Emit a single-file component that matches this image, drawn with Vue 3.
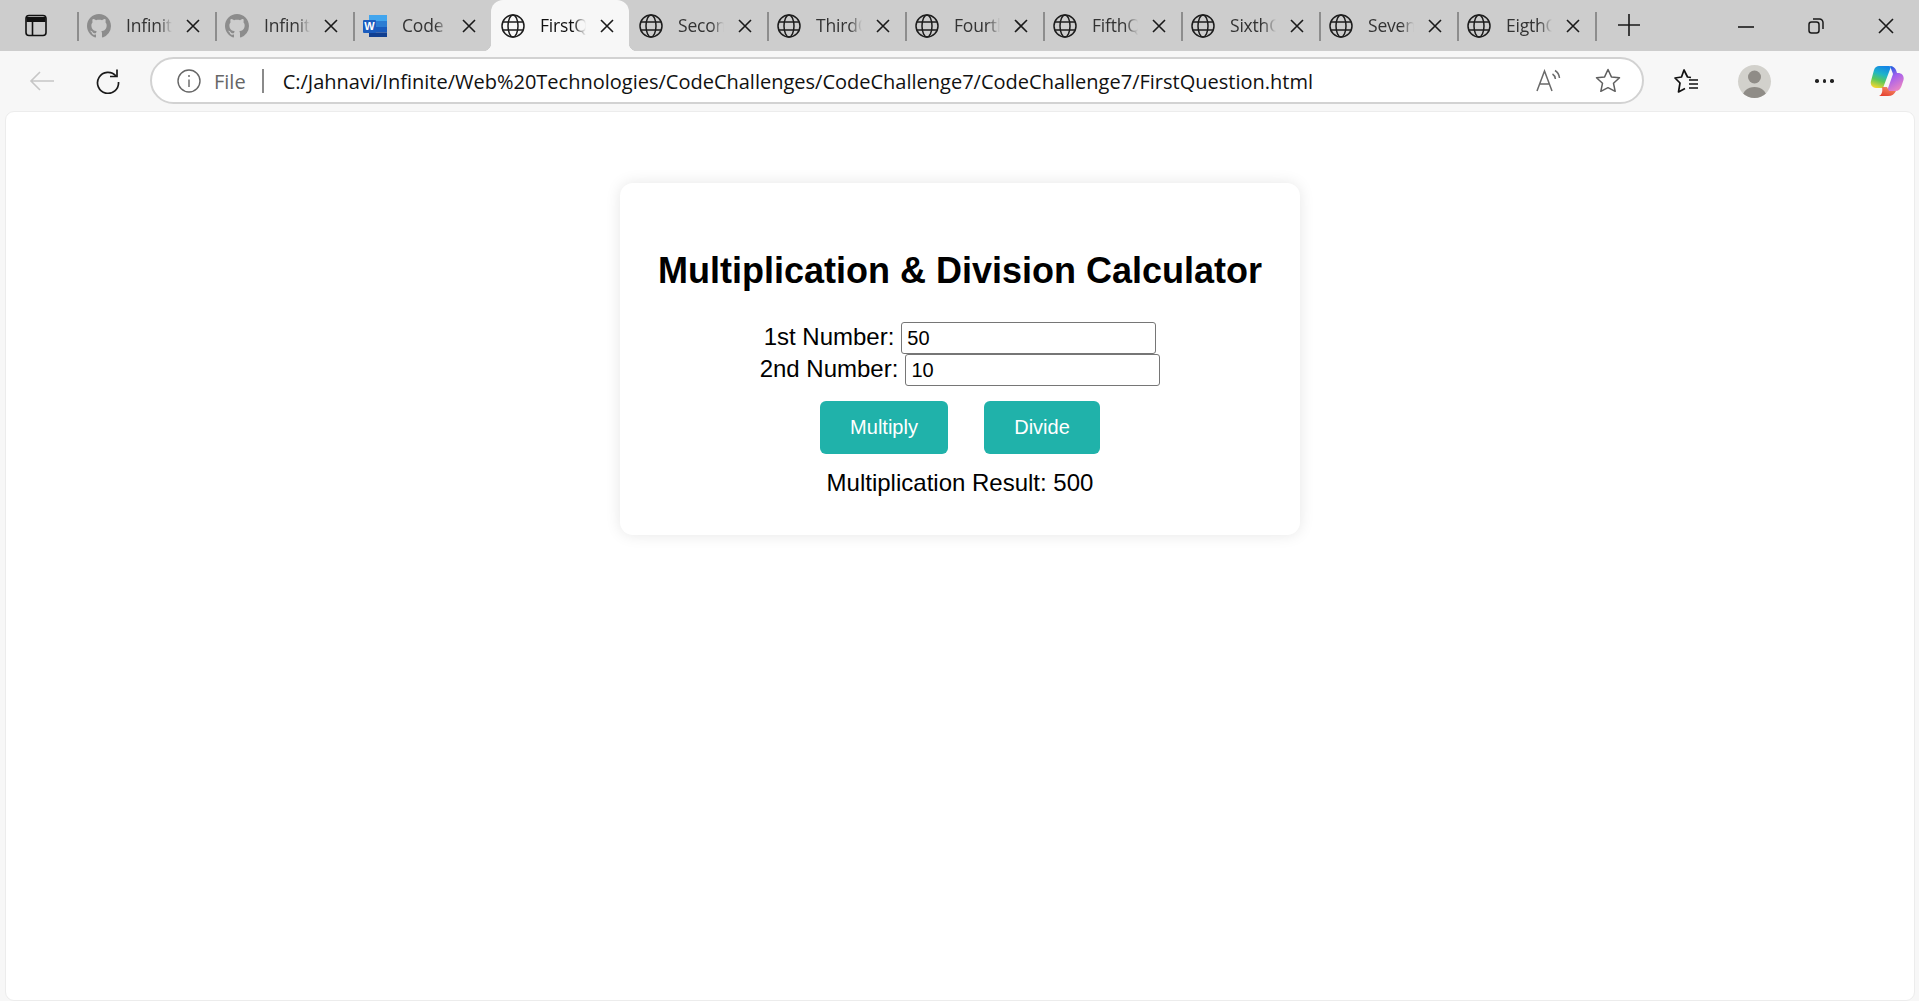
<template>
  <div class="window">
    <div class="tabbar">
      <div class="sidebar-btn">
        <svg width="22" height="23" viewBox="0 0 22 23" fill="none" stroke="#111" stroke-width="1.6">
          <rect x="1" y="1.5" width="20" height="20" rx="3" />
          <path d="M1.5 5.5h19" stroke-width="5" />
          <path d="M7.5 7v14" />
        </svg>
      </div>
      <div
        v-for="(tab, i) in tabs"
        :key="i"
        class="tab"
        :class="{ active: i === activeTab, nosep: i === activeTab || i === activeTab + 1 }"
      >
        <svg v-if="tab.icon === 'github'" class="tab-icon" viewBox="0 0 16 16" fill="#8c8c8c">
          <path d="M8 0C3.58 0 0 3.58 0 8c0 3.54 2.29 6.53 5.47 7.59.4.07.55-.17.55-.38 0-.19-.01-.82-.01-1.49-2.01.37-2.53-.49-2.69-.94-.09-.23-.48-.94-.82-1.13-.28-.15-.68-.52-.01-.53.63-.01 1.08.58 1.23.82.72 1.21 1.87.87 2.33.66.07-.52.28-.87.51-1.07-1.78-.2-3.64-.89-3.64-3.95 0-.87.31-1.59.82-2.15-.08-.2-.36-1.02.08-2.12 0 0 .67-.21 2.2.82.64-.18 1.32-.27 2-.27s1.36.09 2 .27c1.53-1.04 2.2-.82 2.2-.82.44 1.1.16 1.92.08 2.12.51.56.82 1.27.82 2.15 0 3.07-1.87 3.75-3.65 3.95.29.25.54.73.54 1.48 0 1.07-.01 1.93-.01 2.2 0 .21.15.46.55.38A8.01 8.01 0 0 0 16 8c0-4.42-3.58-8-8-8z" />
        </svg>
        <svg v-else-if="tab.icon === 'word'" class="tab-icon" viewBox="0 0 24 24">
          <rect x="6" y="1" width="18" height="6" fill="#41a5ee" />
          <rect x="6" y="7" width="18" height="6" fill="#2b7cd3" />
          <rect x="6" y="13" width="18" height="5.5" fill="#185abd" />
          <rect x="6" y="18.5" width="18" height="4.5" fill="#103f91" />
          <rect x="0" y="6" width="13" height="13" rx="1" fill="#1a5cbe" />
          <text x="6.5" y="16" class="word-letter" text-anchor="middle">W</text>
        </svg>
        <svg v-else class="tab-icon" viewBox="0 0 24 24" fill="none" stroke="#1c1c1c" stroke-width="1.5">
          <circle cx="12" cy="12" r="11" />
          <ellipse cx="12" cy="12" rx="5" ry="11" />
          <path d="M2 8h20M2 16h20" />
        </svg>
        <span class="tab-title">{{ tab.title }}</span>
        <svg class="tab-close" viewBox="0 0 14 14" fill="none" stroke="#1a1a1a" stroke-width="1.6">
          <path d="M1 1l12 12M13 1L1 13" />
        </svg>
      </div>
      <div class="tab-end"></div>
      <div class="new-tab">
        <svg width="22" height="22" viewBox="0 0 22 22" stroke="#1a1a1a" stroke-width="1.6">
          <path d="M11 0v22M0 11h22" />
        </svg>
      </div>
      <div class="win-controls">
        <svg width="16" height="16" viewBox="0 0 16 16" stroke="#1a1a1a" stroke-width="1.6" fill="none">
          <path d="M0 9h16" />
        </svg>
        <svg width="16" height="16" viewBox="0 0 16 16" stroke="#1a1a1a" stroke-width="1.5" fill="none">
          <rect x="1" y="4" width="10" height="11" rx="2.5" />
          <path d="M5 1h6.5A3.5 3.5 0 0 1 15 4.5V11" />
        </svg>
        <svg width="16" height="16" viewBox="0 0 16 16" stroke="#1a1a1a" stroke-width="1.6" fill="none">
          <path d="M1 1l14 14M15 1L1 15" />
        </svg>
      </div>
    </div>

    <div class="toolbar">
      <svg class="back" width="26" height="22" viewBox="0 0 26 22" fill="none" stroke="#c6c6c6" stroke-width="1.6">
        <path d="M25 11H2M11 2l-9 9 9 9" />
      </svg>
      <svg class="reload" width="26" height="26" viewBox="0 0 26 26" fill="none" stroke="#1a1a1a" stroke-width="1.7">
        <path d="M21 8a10.5 10.5 0 1 0 2.5 6" />
        <path d="M22 1.5V8.500h-7" />
      </svg>
      <div class="omnibox">
        <svg class="info" width="24" height="24" viewBox="0 0 24 24" fill="none" stroke="#666" stroke-width="1.4">
          <circle cx="12" cy="12" r="11" />
          <path d="M12 10.500v7.500M12 6v2" />
        </svg>
        <span class="file">File</span>
        <span class="omni-sep"></span>
        <span class="url">C:/Jahnavi/Infinite/Web%20Technologies/CodeChallenges/CodeChallenge7/CodeChallenge7/FirstQuestion.html</span>
        <svg class="read" width="25" height="23" viewBox="0 0 25 23" fill="none" stroke="#6a6a6a" stroke-width="1.5">
          <path d="M1 22L8.500 2l7.500 20M3.800 15h9.400" />
          <path d="M16.500 5c1.600 1 2.600 2.600 2.900 5M19 1.500c2.500 1.500 4.100 4 4.500 7.500" />
        </svg>
        <svg class="star" width="26" height="25" viewBox="0 0 26 25" fill="none" stroke="#5f5f5f" stroke-width="1.5" stroke-linejoin="round">
          <path d="M13 1.500l3.400 7.400 8.100.9-6 5.500 1.700 8L13 19.700l-7.200 3.600 1.700-8-6-5.500 8.100-.9z" />
        </svg>
      </div>
      <svg class="favs" width="25" height="24" viewBox="0 0 25 24" fill="none" stroke="#111" stroke-width="1.7" stroke-linejoin="round">
        <path d="M17 8.500l-3.500-.5L10 1 7.500 8 1 9l5 5-1.500 9L11 19.500" />
        <path d="M15 11h9M15 15h9M15 19h9" />
      </svg>
      <div class="avatar">
        <svg width="33" height="33" viewBox="0 0 33 33" fill="#8f8c87">
          <circle cx="16.500" cy="12" r="6.500" />
          <path d="M4.500 33c0-7 5-11 12-11s12 4 12 11z" />
        </svg>
      </div>
      <div class="dots"><i></i><i></i><i></i></div>
      <svg class="copilot" width="34" height="32" viewBox="0 0 34 32">
        <defs>
          <linearGradient id="copA" x1="0.6" y1="0" x2="0.3" y2="1">
            <stop offset="0" stop-color="#1487e6" />
            <stop offset="0.35" stop-color="#1fb5c8" />
            <stop offset="0.65" stop-color="#5cc95a" />
            <stop offset="1" stop-color="#f5d62f" />
          </linearGradient>
          <linearGradient id="copB" x1="0.3" y1="0" x2="0.7" y2="1">
            <stop offset="0" stop-color="#1f5fe0" />
            <stop offset="0.4" stop-color="#a45fee" />
            <stop offset="1" stop-color="#f088c0" />
          </linearGradient>
          <linearGradient id="copC" x1="0.8" y1="0" x2="0.2" y2="1">
            <stop offset="0" stop-color="#f5906a" />
            <stop offset="1" stop-color="#e5402f" />
          </linearGradient>
        </defs>
        <path d="M9 1h10c1.500 0 2 1 1.500 2L13 23H6C2 23 0 19 1 16L4 5C5 2 7 1 9 1z" fill="url(#copA)" />
        <path d="M20 1c3 0 5 2 6 4l1 3h1c4 0 6.500 3 5.500 7l-2 6c-1 3-3 5-6 5H17l6-17z" fill="url(#copB)" />
        <path d="M12 22h5l2 4h7c-1.500 3-4 5-8 5H9c2.500-1 4-4 3-9z" fill="url(#copC)" />
      </svg>
    </div>

    <div class="sheet">
      <div class="card">
        <h1 class="title">Multiplication &amp; Division Calculator</h1>
        <div class="field">
          <label for="num1">1st Number:</label>
          <input id="num1" v-model="first" type="text" />
        </div>
        <div class="field">
          <label for="num2">2nd Number:</label>
          <input id="num2" v-model="second" type="text" />
        </div>
        <div class="actions">
          <button class="multiply" @click="multiply">Multiply</button>
          <button class="divide" @click="divide">Divide</button>
        </div>
        <p class="result">{{ result }}</p>
      </div>
    </div>
  </div>
</template>

<script setup>
import { ref } from 'vue'

const activeTab = 3

// titles as far as they can be read, the browser cuts them off
const tabs = [
  { title: 'Infinit', icon: 'github' },
  { title: 'Infinit', icon: 'github' },
  { title: 'Code', icon: 'word' },
  { title: 'FirstQ', icon: 'globe' },
  { title: 'Secon', icon: 'globe' },
  { title: 'ThirdQ', icon: 'globe' },
  { title: 'Fourth', icon: 'globe' },
  { title: 'FifthQ', icon: 'globe' },
  { title: 'SixthQ', icon: 'globe' },
  { title: 'Seven', icon: 'globe' },
  { title: 'EigthQ', icon: 'globe' }
]

const first = ref('50')
const second = ref('10')
const result = ref('Multiplication Result: 500')

function multiply() {
  result.value = 'Multiplication Result: ' + Number(first.value) * Number(second.value)
}

function divide() {
  result.value = 'Division Result: ' + Number(first.value) / Number(second.value)
}
</script>

<style>
html,
body {
  margin: 0;
  height: 100%;
  overflow: hidden;
  background: #f7f7f7;
}
</style>

<style scoped>
.window {
  height: 1001px;
  display: flex;
  flex-direction: column;
  background: #f7f7f7;
  font-family: 'Open Sans', 'Noto Sans', sans-serif;
}

.tabbar {
  height: 51px;
  flex: none;
  display: flex;
  align-items: stretch;
  background: #cdcdcd;
}
.sidebar-btn {
  width: 77px;
  flex: none;
  box-sizing: border-box;
  padding: 14px 0 0 25px;
}
.sidebar-btn svg {
  display: block;
}

.tab {
  width: 138px;
  flex: none;
  position: relative;
  box-sizing: border-box;
  display: flex;
  align-items: center;
  padding: 0 16px 0 10px;
  color: #333;
}
.tab::before {
  content: '';
  position: absolute;
  left: 0;
  top: 12px;
  height: 29px;
  width: 2px;
  background: #8d8d8d;
}
.tab.nosep::before {
  display: none;
}
.tab.active {
  background: #f7f7f7;
  border-radius: 12px 12px 0 0;
  color: #111;
}
.tab.active::after {
  content: '';
  position: absolute;
  left: -8px;
  right: -8px;
  bottom: 0;
  height: 8px;
  z-index: 0;
  background:
    radial-gradient(circle at 0 0, #cdcdcd 8px, #f7f7f7 8.500px) left / 8px 8px no-repeat,
    radial-gradient(circle at 100% 0, #cdcdcd 8px, #f7f7f7 8.500px) right / 8px 8px no-repeat;
}
.tab-icon {
  width: 24px;
  height: 24px;
  flex: none;
}
.word-letter {
  font-family: 'Liberation Sans', Arial, sans-serif;
  font-size: 11px;
  font-weight: 700;
  fill: #fff;
}
/* wider than the 46px it shows, the mask does the cutting */
.tab-title {
  width: 60px;
  margin-left: 15px;
  margin-right: -14px;
  padding-bottom: 1px;
  flex: none;
  white-space: nowrap;
  font-size: 17.500px;
  letter-spacing: -0.2px;
  -webkit-mask-image: linear-gradient(to right, #000 33px, transparent 46px);
  mask-image: linear-gradient(to right, #000 33px, transparent 46px);
}
.tab-close {
  width: 14px;
  height: 14px;
  flex: none;
  margin-left: 14px;
}
.tab-end {
  width: 2px;
  height: 29px;
  margin-top: 12px;
  background: #8d8d8d;
  flex: none;
}
.new-tab {
  width: 22px;
  flex: none;
  margin-left: 21px;
  padding-top: 14px;
}
.new-tab svg {
  display: block;
}
.win-controls {
  margin-left: auto;
  display: flex;
  gap: 54px;
  padding: 18px 25px 0 0;
}
.win-controls svg {
  display: block;
}

.toolbar {
  height: 60px;
  flex: none;
  display: flex;
  align-items: center;
  box-sizing: border-box;
  padding: 0 15px 0 29px;
}
.back {
  flex: none;
}
.reload {
  flex: none;
  margin-left: 40px;
}
.omnibox {
  width: 1494px;
  height: 47px;
  margin-left: 29px;
  margin-bottom: 1px;
  flex: none;
  box-sizing: border-box;
  display: flex;
  align-items: center;
  background: #fff;
  border: 2px solid #d2d2d2;
  border-radius: 24px;
  padding: 0 21px 0 25px;
}
.info {
  flex: none;
}
.file {
  margin-left: 13px;
  padding-top: 2px;
  font-size: 20px;
  color: #666;
}
.omni-sep {
  width: 2px;
  height: 24px;
  margin-left: 16px;
  background: #8a8a8a;
}
.url {
  margin-left: 19px;
  padding-top: 2px;
  font-size: 20px;
  color: #111;
  white-space: nowrap;
}
.read {
  margin-left: auto;
}
.star {
  margin-left: 34px;
}
.favs {
  flex: none;
  margin-left: 30px;
}
.avatar {
  width: 33px;
  height: 33px;
  margin-left: 39px;
  flex: none;
  border-radius: 50%;
  background: #d2d1cc;
  overflow: hidden;
}
.avatar svg {
  display: block;
}
.dots {
  display: flex;
  gap: 4px;
  margin-left: 44px;
  flex: none;
}
.dots i {
  width: 3.500px;
  height: 3.500px;
  border-radius: 50%;
  background: #222;
}
.copilot {
  flex: none;
  margin-left: 36px;
}

.sheet {
  flex: 1;
  margin: 0 4px 0 5px;
  padding-top: 71px;
  background: #fff;
  border: 1px solid #ececec;
  border-radius: 9px;
  display: flex;
  flex-direction: column;
  align-items: center;
  box-sizing: border-box;
}

.card {
  width: 680px;
  height: 352px;
  box-sizing: border-box;
  padding-top: 64px;
  background: #fff;
  border-radius: 13px;
  box-shadow: 0 0 15px rgba(0, 0, 0, 0.1);
  display: flex;
  flex-direction: column;
  align-items: center;
  font-family: 'Liberation Sans', Arial, sans-serif;
  color: #000;
}
.title {
  margin: 0 0 27px;
  font-size: 36px;
  line-height: 48px;
  font-weight: 700;
}
.field {
  height: 32px;
  display: flex;
  align-items: center;
  gap: 7px;
  font-size: 24px;
}
.field label {
  padding-bottom: 2px;
}
.field input {
  width: 255px;
  height: 32px;
  box-sizing: border-box;
  padding: 0 5px;
  border: 1px solid #767676;
  border-radius: 3px;
  font-family: inherit;
  font-size: 20px;
  color: #000;
  background: #fff;
  outline: none;
}
.actions {
  display: flex;
  gap: 36px;
  margin-top: 15px;
}
.actions button {
  height: 53px;
  box-sizing: border-box;
  border: none;
  border-radius: 6px;
  background: #20b2aa;
  color: #fff;
  font-family: inherit;
  font-size: 20px;
}
.multiply {
  width: 128px;
}
.divide {
  width: 116px;
}
.result {
  margin: 15px 0 0;
  font-size: 24px;
  line-height: 28px;
}
</style>
